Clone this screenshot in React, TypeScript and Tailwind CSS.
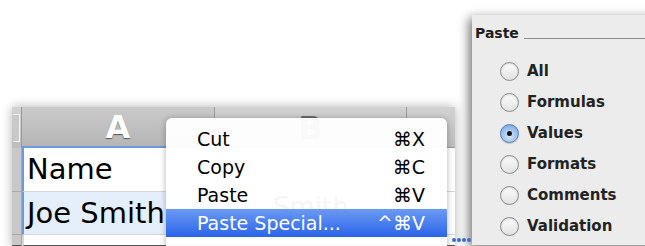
import type { JSX } from 'react';

const menuItems = [
  { label: 'Cut', keys: '⌘X' },
  { label: 'Copy', keys: '⌘C' },
  { label: 'Paste', keys: '⌘V' },
  { label: 'Paste Special...', keys: '^⌘V', active: true },
];

const pasteOptions = ['All', 'Formulas', 'Values', 'Formats', 'Comments', 'Validation'];

function Sheet(): JSX.Element {
  return (
    <div className="ml-[12px] mt-[107px] grid w-[443px] grid-cols-[10px_193px_192px_48px] grid-rows-[41px_44px_43px_12px] shadow-[0_0_10px_rgba(0,0,0,0.3)] [font-family:'DejaVu_Sans',sans-serif]">
      {/* header row */}
      <div className="flex items-center justify-center border-r border-[#9a9a9a] bg-gradient-to-b from-[#d2d2d2] to-[#bdbdbd]">
        <div className="h-[28px] w-[7px] rounded-[1px] border border-l-0 border-[#f4f4f4] bg-[#c9c9c9]" />
      </div>
      <div className="flex items-center justify-center border-b-2 border-r border-b-[#6b98de] border-r-[#9a9a9a] bg-gradient-to-b from-[#cacaca] to-[#b6b6b6] text-[32px] font-bold leading-none text-white [text-shadow:0_1px_1px_rgba(0,0,0,0.55)]">
        A
      </div>
      <div className="flex items-start justify-center border-b border-r border-[#9a9a9a] bg-gradient-to-b from-[#d2d2d2] to-[#bdbdbd] pt-[5px] text-[32px] font-bold leading-none text-[#6a6a6a]">
        B
      </div>
      <div className="border-b border-[#9a9a9a] bg-gradient-to-b from-[#d2d2d2] to-[#bdbdbd]" />

      {/* row 1 */}
      <div className="border-b border-r border-[#a8a8a8] bg-[#c8c8c8]" />
      <div className="flex items-center border-b border-l-2 border-b-[#d6d6d6] border-l-[#6b98de] bg-white pl-[3px] text-[29px] leading-none text-black">
        Name
      </div>
      <div className="border-b border-r border-[#d6d6d6] bg-white" />
      <div className="border-b border-[#d6d6d6] bg-white" />

      {/* row 2 */}
      <div className="border-b border-r border-[#a8a8a8] bg-[#c8c8c8]" />
      <div className="flex items-center border-b border-l-2 border-b-[#d6d6d6] border-l-[#6b98de] bg-[#e5eefb] pl-[3px] text-[29px] leading-none text-black">
        Joe Smith
      </div>
      <div className="flex items-start border-b border-r border-[#d6d6d6] bg-white pl-[58px] pt-[2px] text-[26px] leading-none text-black">
        Smith
      </div>
      <div className="border-b border-[#d6d6d6] bg-white" />

      {/* row 3 */}
      <div className="border-b-2 border-r border-b-[#555] border-r-[#a8a8a8] bg-[#c8c8c8]" />
      <div className="border-b-2 border-l-2 border-b-[#555] border-l-[#d6d6d6] bg-white" />
      <div className="border-b-2 border-r border-b-[#555] border-r-[#d6d6d6] bg-white" />
      <div className="border-b-2 border-[#555] bg-white" />
    </div>
  );
}

function ContextMenu(): JSX.Element {
  return (
    <div className="absolute left-[166px] top-[118px] h-[130px] w-[281px] rounded-t-[6px] bg-white/[0.96] pt-[7px] shadow-[0_1px_6px_rgba(0,0,0,0.3)] [font-family:'DejaVu_Sans',sans-serif]">
      {menuItems.map((item) => (
        <div
          key={item.label}
          className={
            item.active
              ? 'flex h-[28px] items-center justify-between bg-gradient-to-b from-[#6b99f3] to-[#2b63ea] pl-[31px] pr-[22px] text-[19px] leading-none text-white'
              : 'flex h-[28px] items-center justify-between pl-[31px] pr-[22px] text-[19px] leading-none text-black'
          }
        >
          <span>{item.label}</span>
          <span>{item.keys}</span>
        </div>
      ))}
    </div>
  );
}

function Radio({ checked }: { checked: boolean }): JSX.Element {
  return checked ? (
    <span className="flex h-[19px] w-[19px] items-center justify-center rounded-full border border-[#5a7fb8] bg-[radial-gradient(circle_at_50%_65%,#d6e7fb_0%,#9cc1ee_55%,#5b8fd8_100%)] shadow-[0_1px_1px_rgba(0,0,0,0.2)]">
      <span className="h-[5px] w-[5px] rounded-full bg-[#111]" />
    </span>
  ) : (
    <span className="h-[19px] w-[19px] rounded-full border border-[#8c8c8c] bg-gradient-to-b from-[#fdfdfd] to-[#e2e2e2] shadow-[inset_0_1px_2px_rgba(0,0,0,0.15)]" />
  );
}

function PastePanel(): JSX.Element {
  return (
    <div className="absolute left-[472px] top-[15px] h-[230px] w-[190px] bg-[#ececec] shadow-[-3px_3px_10px_rgba(0,0,0,0.55)] [font-family:'DejaVu_Sans',sans-serif]">
      <div className="flex items-center gap-[5px] pl-[3px] pt-[9px]">
        <span className="text-[14px] font-bold leading-[18px] text-[#1c1c1c]">Paste</span>
        <span className="mt-[10px] h-px flex-1 bg-[#8a8a8a]" />
      </div>
      <div className="mt-[14px] flex flex-col pl-[28px]">
        {pasteOptions.map((opt) => (
          <div key={opt} className="flex h-[31px] items-center gap-[8px]">
            <Radio checked={opt === 'Values'} />
            <span className="text-[15px] font-bold leading-none text-[#222]">{opt}</span>
          </div>
        ))}
      </div>
    </div>
  );
}

export default function App(): JSX.Element {
  return (
    <div className="relative h-[246px] w-[645px] overflow-hidden bg-white">
      <Sheet />
      <ContextMenu />
      <PastePanel />
      <div className="absolute left-[452px] top-[238px] flex gap-[1px]">
        <span className="h-[4px] w-[4px] rounded-full bg-[#3a6bcc]" />
        <span className="h-[4px] w-[4px] rounded-full bg-[#3a6bcc]" />
        <span className="h-[4px] w-[4px] rounded-full bg-[#3a6bcc]" />
        <span className="h-[4px] w-[4px] rounded-full bg-[#3a6bcc]" />
      </div>
    </div>
  );
}
